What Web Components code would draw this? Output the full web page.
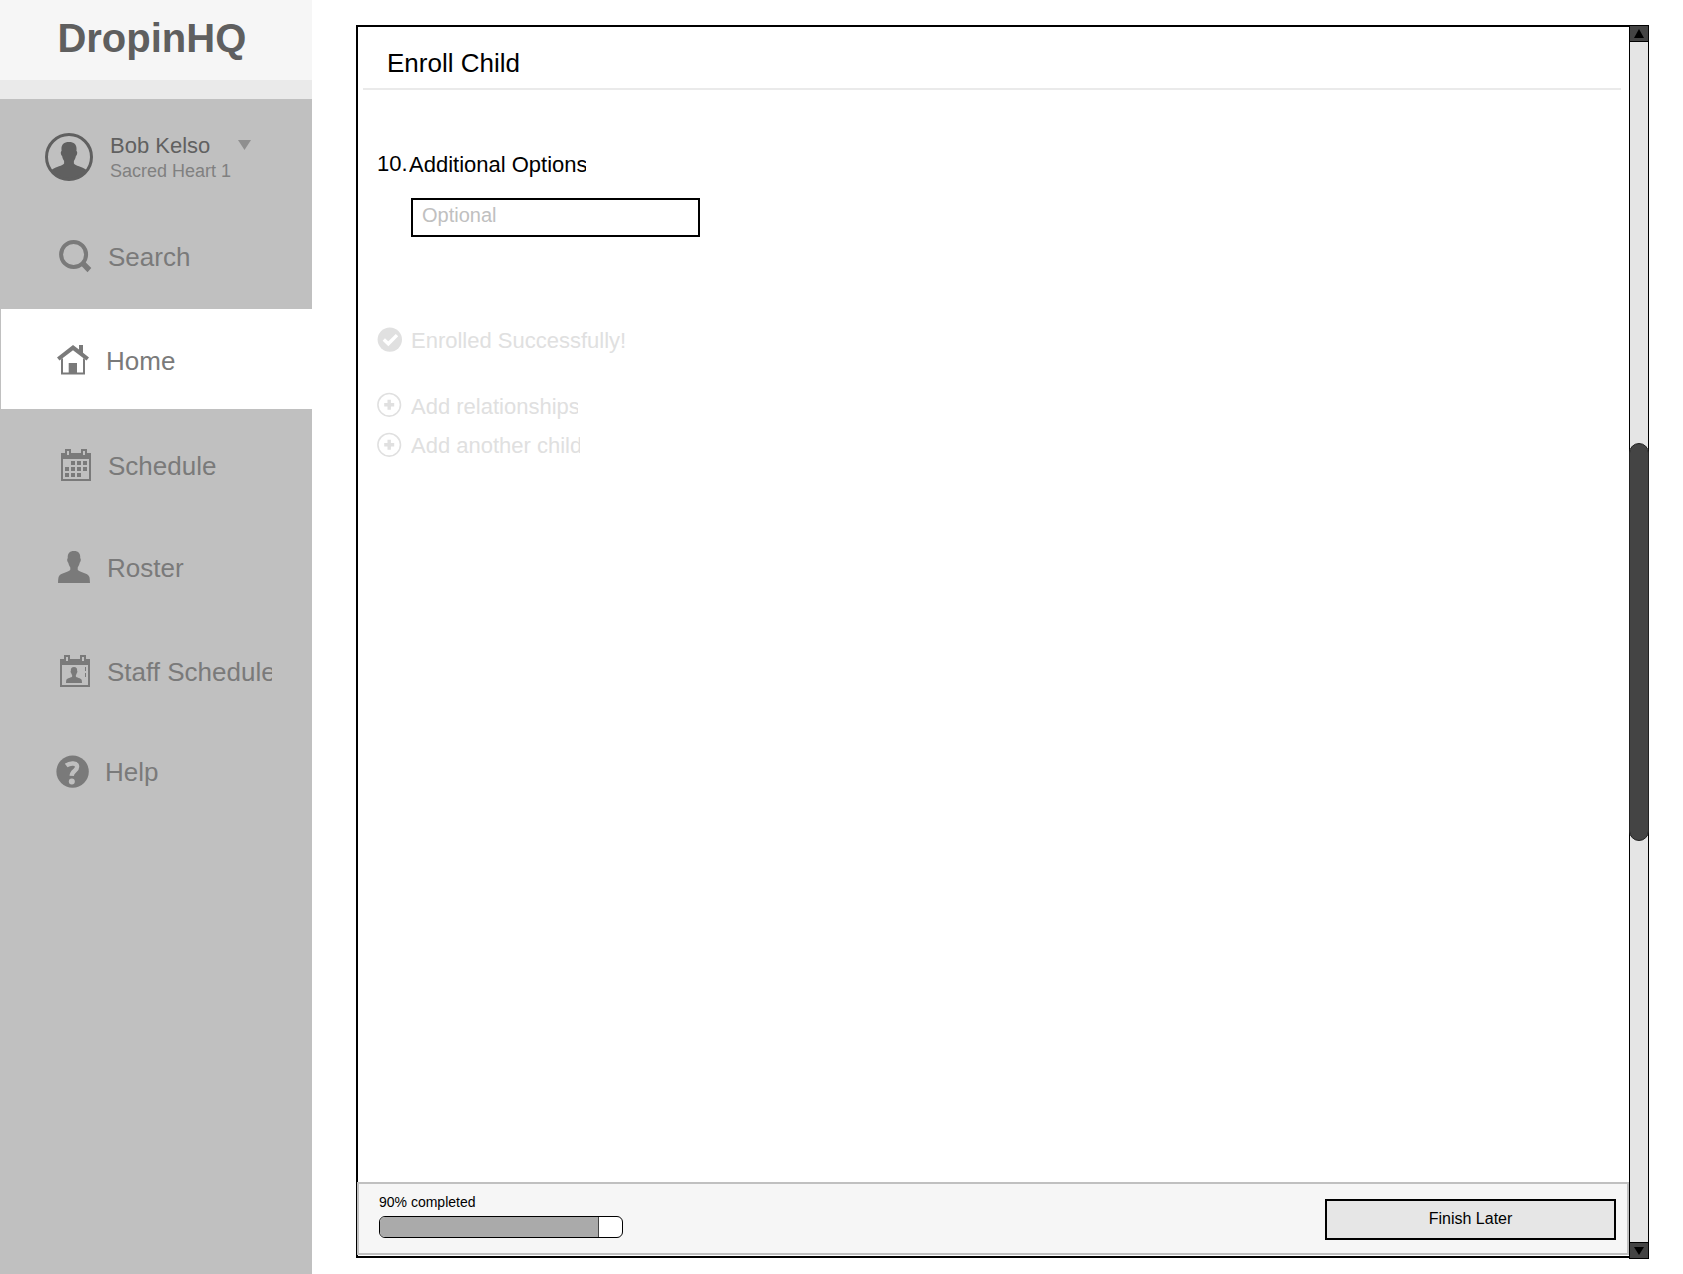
<!DOCTYPE html>
<html lang="en">
<head>
<meta charset="utf-8">
<title>DropinHQ - Enroll Child</title>
<style>
html, body {
    margin: 0;
    height: 100%;
    background: #ffffff;
    font-family: "Liberation Sans", Arial, sans-serif;
    overflow: hidden;
}
</style>
</head>
<body>
<app-shell>
    <side-bar slot="side">
        <span slot="brand">DropinHQ</span>
        <user-badge slot="user">
            <span slot="name">Bob Kelso</span>
            <span slot="place">Sacred Heart 1</span>
        </user-badge>
        <nav-item icon="search" style="--indent: 59px; --label: 49px">Search</nav-item>
        <nav-item icon="home" active style="--indent: 57px; --space: 4px; --label: 49px">Home</nav-item>
        <nav-item icon="calendar" style="--indent: 60px; --space: 5px">Schedule</nav-item>
        <nav-item icon="person" style="--indent: 58px; --space: 2px; --label: 49px">Roster</nav-item>
        <nav-item icon="staff" style="--indent: 59px; --space: 4px; --clip: 165px">Staff Schedule</nav-item>
        <nav-item icon="help" style="--indent: 56px; --label: 49px">Help</nav-item>
    </side-bar>
    <enroll-panel>
        <span slot="title">Enroll Child</span>
        <form-question>
            <span slot="number">10.</span>
            <span slot="label">Additional Options</span>
            <span slot="hint">Optional</span>
        </form-question>
        <status-line icon="check" style="--space: 90px; --drop: 1px">Enrolled Successfully!</status-line>
        <status-line icon="plus" style="--space: 40px; --drop: 2px; --clip: 167.5px">Add relationships</status-line>
        <status-line icon="plus" style="--space: 15px; --drop: 1px; --clip: 169px">Add another child</status-line>
        <progress-meter slot="footer" value="90">90% completed</progress-meter>
        <action-button slot="footer">Finish Later</action-button>
    </enroll-panel>
    <scroll-bar></scroll-bar>
</app-shell>

<script>
const person = "M16 0C20.6 0 22.7 2.6 22.2 7.3C23.3 7.8 22.8 11 21.7 11.8C21.3 14 20.4 15.3 19.7 16.6V18.8C20.6 21.3 30 21.6 31.4 26C31.8 27.6 31.9 30 32 32H0C.1 30 .2 27.6 .6 26C2 21.6 11.4 21.3 12.3 18.8V16.6C11.6 15.3 10.7 14 10.3 11.8C9.2 11 8.7 7.8 9.8 7.3C9.3 2.6 11.4 0 16 0Z";

// calendar outline with the two rings, shared by both calendar icons
const calendarFrame = `
    <path fill-rule="evenodd" d="M1 4H5V0H11V4H21V0H27V4H31V32H1ZM3 10V30H29V10ZM7 2V6H9V2ZM23 2V6H25V2Z"/>`;

const icons = {
    search: `
        <circle cx="14.6" cy="14.5" r="12.5" fill="none" stroke="currentColor" stroke-width="4"/>
        <path d="M22 25.5L25.8 21.5L32.3 28L28.5 32.2Z"/>`,
    home: `
        <path d="M0 13.5L16 1L22 5.6V1H26V8.7L32 13.5L29.5 16.6L16 6.2L2.5 16.6Z"/>
        <path d="M4 15.5L6 14V28.6H11.7V19H20V28.6H26V14L28 15.5V30.6H4Z"/>`,
    calendar: calendarFrame + `
        <path d="M11 12h4v4h-4zM17 12h4v4h-4zM23 12h4v4h-4zM5 18h4v4h-4zM11 18h4v4h-4zM17 18h4v4h-4zM23 18h4v4h-4zM5 24h4v4h-4zM11 24h4v4h-4zM17 24h4v4h-4z"/>`,
    person: `<path d="${person}"/>`,
    staff: calendarFrame + `
        <path transform="translate(7 12) scale(.5)" d="${person}"/>
        <path d="M26 12h1v4h-1zM26 18h1v4h-1z"/>`,
    help: `
        <circle cx="16.6" cy="16.6" r="16.2"/>
        <path d="M10.2 10.6C14.2 7.5 21.1 7.7 21.1 11.8C21.1 16.1 15.9 15.3 15.7 20.9" fill="none" stroke="#c0c0c0" stroke-width="4.4"/>
        <circle cx="15.8" cy="26.4" r="3" fill="#c0c0c0"/>`,
    check: `
        <circle cx="12.8" cy="12.6" r="12.2"/>
        <path d="M6.8 12.6L11.3 16.8L20 8.1" fill="none" stroke="#fff" stroke-width="3.4"/>`,
    plus: `
        <circle cx="12.2" cy="12.8" r="11.3" fill="none" stroke="currentColor" stroke-width="1.6"/>
        <path d="M10.5 7.8h3.4v3.3h3.3v3.4h-3.3v3.3h-3.4v-3.3H7.2v-3.4h3.3z"/>`
};

function define(name, html, setup) {
    const template = document.createElement("template");
    template.innerHTML = html;
    customElements.define(name, class extends HTMLElement {
        constructor() {
            super();
            this.attachShadow({mode: "open"});
            this.shadowRoot.appendChild(template.content.cloneNode(true));
        }

        connectedCallback() {
            if (setup) setup(this, this.shadowRoot);
        }
    });
}

function setIcon(host, root) {
    root.querySelector("svg").innerHTML = icons[host.getAttribute("icon")];
}

define("app-shell", `
<style>
:host {
    display: flex;
    align-items: flex-start;
    height: 100vh;
}
</style>
<slot name="side"></slot>
<slot></slot>
`);

define("side-bar", `
<style>
:host {
    display: flex;
    flex-direction: column;
    width: 312px;
    height: 100%;
    flex: none;
    background: #c0c0c0;
    color: #7a7a7a;
}
header {
    box-sizing: border-box;
    height: 99px;
    padding: 16px 0 0 57.4px;
    background: #f6f6f6;
    border-bottom: 19px solid #eaeaea;
    color: #5f5f5f;
    font-size: 40px;
    font-weight: bold;
    line-height: 45px;
}
.user {
    height: 106px;
}
nav {
    display: flex;
    flex-direction: column;
}
</style>
<header><slot name="brand"></slot></header>
<div class="user"><slot name="user"></slot></div>
<nav><slot></slot></nav>
`);

define("user-badge", `
<style>
:host {
    display: flex;
    align-items: flex-start;
    padding: 34px 0 0 45px;
}
svg {
    display: block;
    fill: #606060;
}
.text {
    width: 128px;
    padding-left: 17px;
}
.name {
    color: #606060;
    font-size: 22px;
    line-height: 25px;
}
.place {
    padding-top: 3px;
    color: #808080;
    font-size: 18px;
    line-height: 20px;
    white-space: nowrap;
}
.arrow {
    margin-top: 7px;
    fill: #8f8f8f;
}
</style>
<svg width="48" height="48" viewBox="0 0 48 48">
    <clipPath id="round"><circle cx="24" cy="24" r="23"/></clipPath>
    <path clip-path="url(#round)" d="M24 9C29.8 9 32.2 12.2 31.4 18C32.8 18.6 32.2 22.2 30.9 23C30.4 25.6 29.7 26.8 28.9 28V30.6C30.2 33.2 37 33.2 41.5 37V48H6.5V37C11 33.2 17.8 33.2 19.1 30.6V28C18.3 26.8 17.6 25.6 17.1 23C15.8 22.2 15.2 18.6 16.6 18C15.8 12.2 18.2 9 24 9Z"/>
    <circle cx="24" cy="24" r="22.5" fill="none" stroke="#606060" stroke-width="3"/>
</svg>
<div class="text">
    <div class="name"><slot name="name"></slot></div>
    <div class="place"><slot name="place"></slot></div>
</div>
<svg class="arrow" width="13" height="10" viewBox="0 0 13 10"><path d="M0 0H13L6.5 10Z"/></svg>
`);

define("nav-item", `
<style>
:host {
    display: flex;
    align-items: flex-start;
    box-sizing: border-box;
    height: 100px;
    margin-top: var(--space, 0);
    padding: 35px 0 0 var(--indent);
}
:host([active]) {
    background: #ffffff;
    border-left: 1px solid #c0c0c0;
    padding-left: calc(var(--indent) - 1px);
}
svg {
    display: block;
    overflow: visible;
    fill: currentColor;
}
.label {
    width: var(--clip, auto);
    margin: 2px 0 0 calc(var(--label, 48px) - 32px);
    overflow: hidden;
    white-space: nowrap;
    font-size: 26px;
    line-height: 30px;
}
</style>
<svg width="32" height="32" viewBox="0 0 32 32"></svg>
<div class="label"><slot></slot></div>
`, setIcon);

define("enroll-panel", `
<style>
:host {
    display: flex;
    flex-direction: column;
    box-sizing: border-box;
    width: 1273px;
    height: 1233px;
    margin: 25px 0 0 44px;
    border: 2px solid #000000;
    border-right: 0;
    color: #000000;
}
h1 {
    box-sizing: border-box;
    height: 63px;
    margin: 0 8px 0 5px;
    padding: 21px 0 0 24px;
    border-bottom: 2px solid #eaeaea;
    font-size: 26px;
    font-weight: normal;
    line-height: 30px;
}
main {
    flex: 1;
    padding: 61px 0 0 18px;
}
footer {
    display: flex;
    justify-content: space-between;
    align-items: flex-start;
    box-sizing: border-box;
    height: 73px;
    margin: 0 0 1px -1px;
    padding: 10px 11px 0 20px;
    background: #f6f6f6;
    border: 2px solid #c0c0c0;
}
</style>
<h1><slot name="title"></slot></h1>
<main><slot></slot></main>
<footer><slot name="footer"></slot></footer>
`);

define("form-question", `
<style>
:host {
    display: block;
    font-size: 22px;
    line-height: 25px;
}
.row {
    display: flex;
}
.number {
    width: 32px;
    padding-left: 1px;
}
.label {
    width: 177px;
    padding-top: 1px;
    overflow: hidden;
    white-space: nowrap;
}
.field {
    box-sizing: border-box;
    width: 289px;
    height: 39px;
    margin: 21px 0 0 35px;
    padding: 4px 0 0 9px;
    border: 2px solid #000000;
    color: #c0c0c0;
    font-size: 20px;
    line-height: 22px;
}
</style>
<div class="row">
    <div class="number"><slot name="number"></slot></div>
    <div class="label"><slot name="label"></slot></div>
</div>
<div class="field"><slot name="hint"></slot></div>
`);

define("status-line", `
<style>
:host {
    display: flex;
    align-items: flex-start;
    height: 25px;
    margin-top: var(--space);
    color: #e0e0e0;
}
svg {
    display: block;
    margin-left: .8px;
    overflow: visible;
    fill: currentColor;
}
.label {
    width: var(--clip, auto);
    margin: var(--drop, 0) 0 0 9.2px;
    overflow: hidden;
    white-space: nowrap;
    font-size: 22px;
    line-height: 25px;
}
</style>
<svg width="25" height="25" viewBox="0 0 25 25"></svg>
<div class="label"><slot></slot></div>
`, setIcon);

define("progress-meter", `
<style>
:host {
    display: block;
    font-size: 14px;
    line-height: 16px;
}
.bar {
    box-sizing: border-box;
    width: 244px;
    height: 22px;
    margin-top: 6px;
    border: 1px solid #000000;
    border-radius: 6px;
    background: #ffffff;
    overflow: hidden;
}
.fill {
    height: 100%;
    background: #aaaaaa;
    border-right: 1px solid #444444;
}
</style>
<slot></slot>
<div class="bar"><div class="fill"></div></div>
`, (host, root) => {
    root.querySelector(".fill").style.width = host.getAttribute("value") + "%";
});

define("action-button", `
<style>
:host {
    box-sizing: border-box;
    width: 291px;
    height: 41px;
    margin-top: 5px;
    padding-top: 9px;
    border: 2px solid #000000;
    background: #e6e6e6;
    font-size: 16px;
    line-height: 18px;
    text-align: center;
}
</style>
<slot></slot>
`);

define("scroll-bar", `
<style>
:host {
    display: flex;
    flex-direction: column;
    box-sizing: border-box;
    width: 20px;
    height: 1234px;
    margin-top: 25px;
    border: 1px solid #000000;
    background: #e5e5e5;
}
svg {
    display: block;
    flex: none;
    background: #444444;
}
.track {
    flex: 1;
    border: solid #000000;
    border-width: 1px 0;
}
.thumb {
    box-sizing: border-box;
    height: 398px;
    margin: 401px -1px 0;
    border: 1px solid #222222;
    border-radius: 10px;
    background: #444444;
}
</style>
<svg width="18" height="15" viewBox="0 0 18 15"><path d="M9 3L14 12H4Z"/></svg>
<div class="track"><div class="thumb"></div></div>
<svg width="18" height="15" viewBox="0 0 18 15"><path d="M9 12L14 4H4Z"/></svg>
`);
</script>
</body>
</html>
